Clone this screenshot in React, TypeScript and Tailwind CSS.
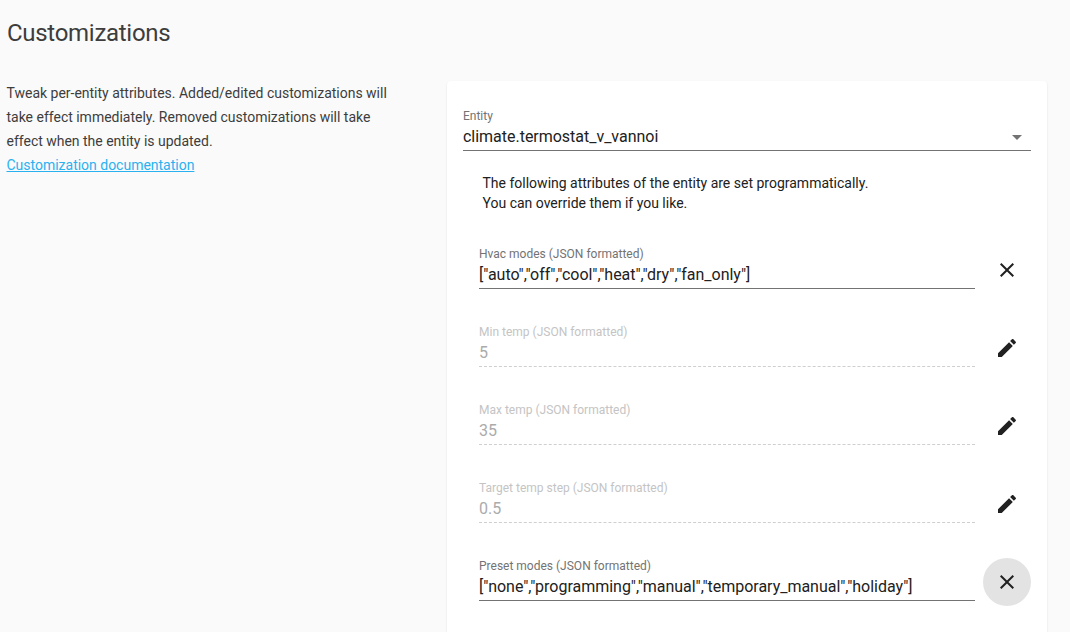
import React from "react";

const closePath = "M19 6.41 17.59 5 12 10.59 6.41 5 5 6.41 10.59 12 5 17.59 6.41 19 12 13.41 17.59 19 19 17.59 13.41 12z";
const pencilPath =
  "M20.71 7.04c.39-.39.39-1.04 0-1.41l-2.34-2.34c-.37-.39-1.02-.39-1.41 0l-1.84 1.83 3.75 3.75M3 17.25V21h3.75L17.81 9.93l-3.75-3.75L3 17.25z";

const Icon = ({ path }: { path: string }) => (
  <svg viewBox="0 0 24 24" className="w-6 h-6 fill-[#212121]">
    <path d={path} />
  </svg>
);

const attributes = [
  { label: "Hvac modes (JSON formatted)", value: '["auto","off","cool","heat","dry","fan_only"]', editing: true },
  { label: "Min temp (JSON formatted)", value: "5", editing: false },
  { label: "Max temp (JSON formatted)", value: "35", editing: false },
  { label: "Target temp step (JSON formatted)", value: "0.5", editing: false },
  {
    label: "Preset modes (JSON formatted)",
    value: '["none","programming","manual","temporary_manual","holiday"]',
    editing: true,
    focused: true,
  },
];

const AttributeRow = ({
  label,
  value,
  editing,
  focused,
}: {
  label: string;
  value: string;
  editing: boolean;
  focused?: boolean;
}) => (
  <div className="flex items-center h-[78px] pl-4">
    <div className="w-[496px] shrink-0 pb-[5px]">
      <div className={`text-xs leading-[14px] ${editing ? "text-[#737373]" : "text-[#c4c4c4]"}`}>{label}</div>
      <div
        className={`text-base leading-6 mt-[2px] whitespace-nowrap tracking-[-0.02px] ${editing ? "text-[#212121]" : "text-[#ababab]"}`}
      >
        {value}
      </div>
      {editing ? (
        <div className="h-px mt-px bg-[#737373]" />
      ) : (
        <div className="mt-px border-b border-dashed border-[#cfcfcf]" />
      )}
    </div>
    <div
      className={`ml-2 w-12 h-12 rounded-full flex items-center justify-center ${focused ? "bg-[#e3e3e3]" : ""}`}
    >
      <Icon path={editing ? closePath : pencilPath} />
    </div>
  </div>
);

export default function App() {
  return (
    <div className="h-[632px] overflow-hidden bg-[#fafafa] font-['Roboto',sans-serif] text-[#212121]">
      <h1 className="pl-[7px] pt-[17px] text-2xl leading-8 tracking-[-0.012em] text-[#3d3d3d]">Customizations</h1>
      <div className="flex mt-[32px]">
        <div className="w-[447px] shrink-0 pl-[6.5px] pr-[54px] text-sm leading-6 tracking-[-0.01px] text-[#3d3d3d]">
          Tweak per-entity attributes. Added/edited customizations will take effect immediately. Removed customizations
          will take effect when the entity is updated.
          <br />
          <a href="#" className="underline text-[#2ab1f0]">
            Customization documentation
          </a>
        </div>
        <div className="w-[600px] h-[600px] rounded bg-white shadow-[0_1px_2px_rgba(0,0,0,0.12)] px-4 pt-[28px]">
          <div className="text-xs leading-[14px] text-[#737373]">Entity</div>
          <div className="flex items-center justify-between h-[27px] pt-px pr-[9px] text-base tracking-[-0.02px] text-[#212121]">
            <span>climate.termostat_v_vannoi</span>
            <span className="w-0 h-0 border-x-[5px] border-x-transparent border-t-[5px] border-t-[#737373]" />
          </div>
          <div className="h-px bg-[#737373]" />
          <p className="pl-[19.5px] mt-[22px] text-sm leading-5 text-[#212121]">
            The following attributes of the entity are set programmatically.
            <br />
            You can override them if you like.
          </p>
          <div className="mt-[18px]">
            {attributes.map((attribute) => (
              <AttributeRow key={attribute.label} {...attribute} />
            ))}
          </div>
        </div>
      </div>
    </div>
  );
}
